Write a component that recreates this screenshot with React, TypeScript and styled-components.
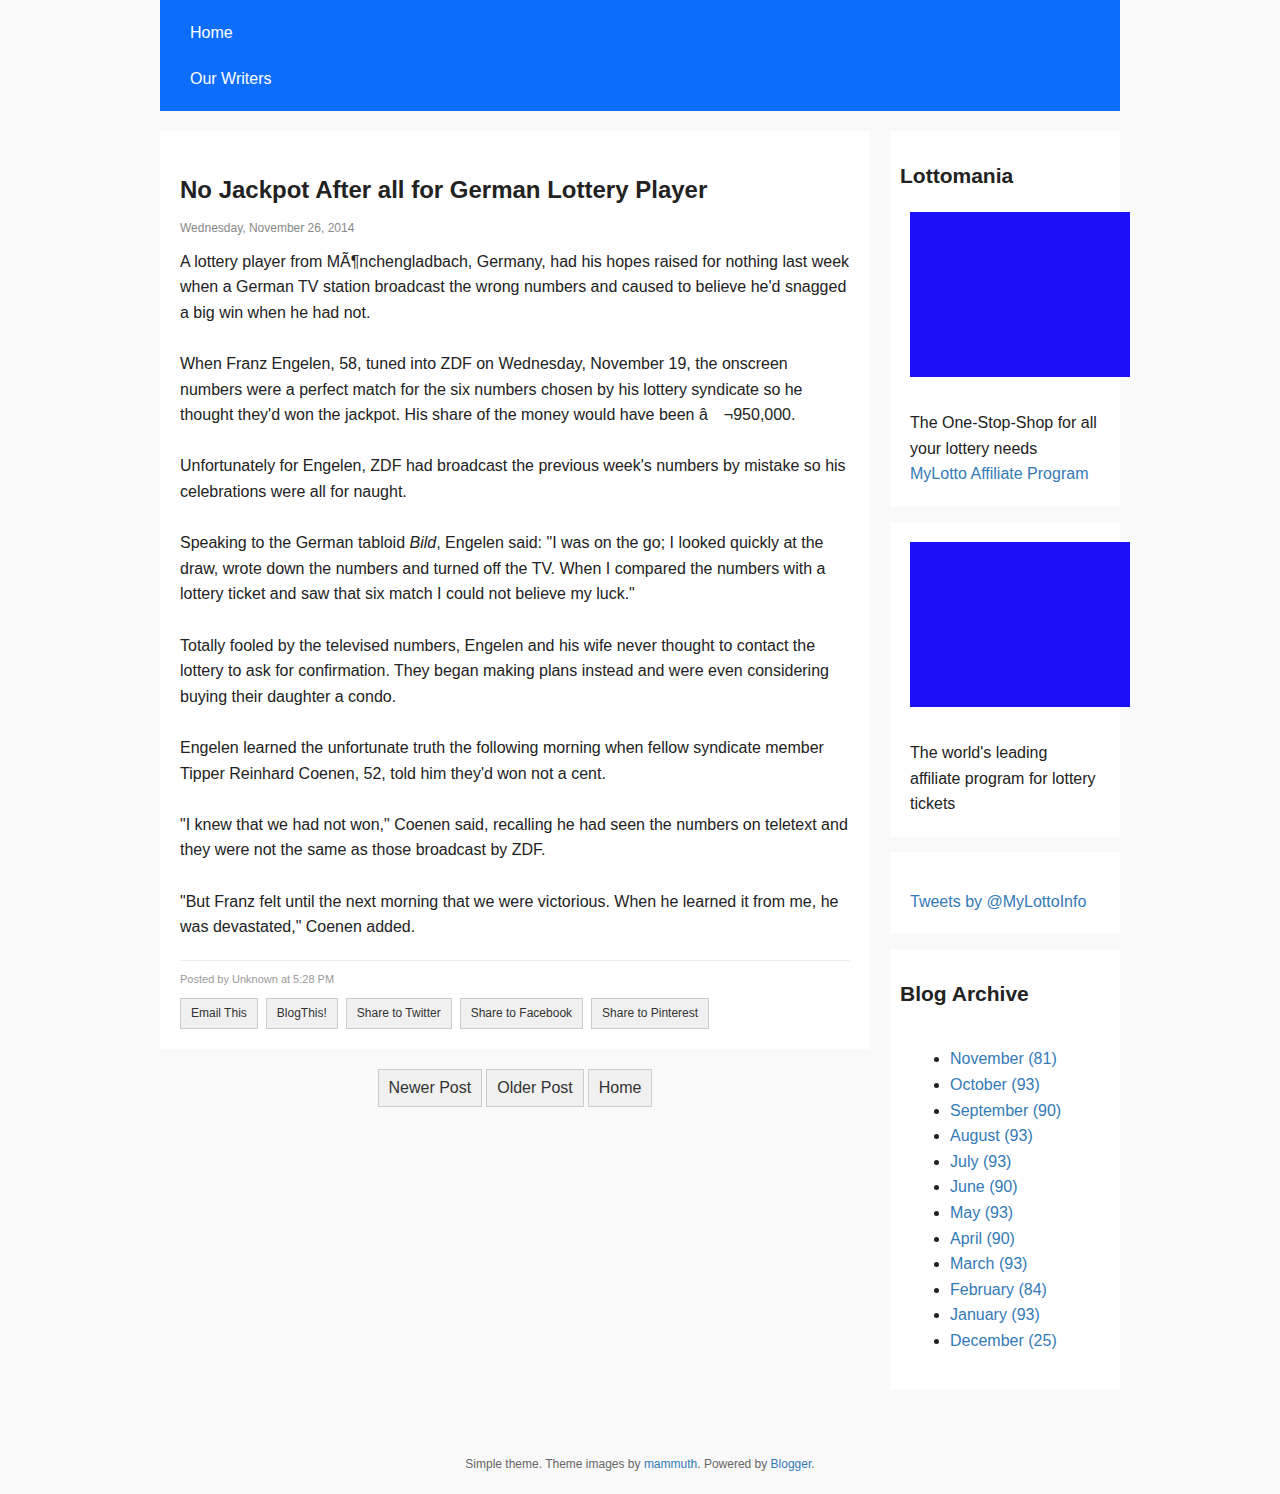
import React from 'react';
import styled, { createGlobalStyle } from 'styled-components';

const GlobalStyle = createGlobalStyle`
  *, *::before, *::after { box-sizing: border-box; }
  body {
    margin: 0;
    background: #f9f9f9;
    color: #222;
    font-family: "Liberation Sans", Arial, Helvetica, sans-serif;
    font-size: 16px;
    line-height: 1.6;
  }
  a { color: #337ab7; text-decoration: none; }
  a:hover { text-decoration: underline; }
`;

const Page = styled.div`
  max-width: 960px;
  margin: 0 auto;
`;

const Nav = styled.nav`
  padding: 10px;
  background: #0d6efd;
`;

const NavLink = styled.a`
  display: block;
  padding: 10px 20px;
  && { color: #fff; }
`;

const Columns = styled.div`
  display: grid;
  grid-template-columns: minmax(0, 1fr) 230px;
  align-items: start;
  gap: 20px;
  margin-top: 20px;
  @media (max-width: 700px) {
    grid-template-columns: minmax(0, 1fr);
  }
`;

const Main = styled.main`
  min-width: 0;
`;

const Sidebar = styled.aside`
  display: flex;
  flex-direction: column;
  gap: 15px;
`;

const Post = styled.article`
  padding: 20px;
  background: #fff;
`;

const PostTitle = styled.h2`
  margin-bottom: 10px;
  font-size: 24px;
`;

const PostDate = styled.time`
  display: block;
  margin-bottom: 10px;
  color: #888;
  font-size: 12px;
`;

const PostBody = styled.div`
  display: flex;
  flex-direction: column;
  gap: 1.6em;
`;

const Paragraph = styled.p`
  margin: 0;
`;

const PostFooter = styled.footer`
  margin-top: 20px;
  padding-top: 10px;
  border-top: 1px solid #eee;
`;

const Byline = styled.p`
  margin: 0 0 10px;
  color: #999;
  font-size: 11px;
`;

const ShareRow = styled.div`
  display: flex;
  flex-wrap: wrap;
  gap: 8px;
  font-size: 12px;
`;

const BoxLink = styled.a`
  padding: 5px 10px;
  border: 1px solid #ccc;
  background: #f0f0f0;
  && { color: #333; }
`;

const Pager = styled.nav`
  display: flex;
  justify-content: center;
  gap: 4px;
  margin-top: 20px;
`;

const Widget = styled.section`
  padding: 10px;
  background: #fff;
`;

const WidgetTitle = styled.h2`
  margin-bottom: 10px;
  font-size: 21px;
`;

const WidgetContent = styled.div`
  padding: 10px;
`;

const Banner = styled.div`
  width: 220px;
  height: 165px;
  margin-bottom: 33px;
  background: #1c10f8;
`;

const TweetLink = styled.a`
  display: block;
  margin-top: 17px;
`;

const ArchiveList = styled.ul`
  margin: 16px 0;
  padding-left: 40px;
`;

const Attribution = styled.footer`
  margin-top: 45px;
  padding: 20px;
  color: #666;
  font-size: 12px;
  text-align: center;
`;

const paragraphs: React.ReactNode[] = [
  "A lottery player from MÃ¶nchengladbach, Germany, had his hopes raised for nothing last week when a German TV station broadcast the wrong numbers and caused to believe he'd snagged a big win when he had not.",
  "When Franz Engelen, 58, tuned into ZDF on Wednesday, November 19, the onscreen numbers were a perfect match for the six numbers chosen by his lottery syndicate so he thought they'd won the jackpot. His share of the money would have been â\u2003¬950,000.",
  "Unfortunately for Engelen, ZDF had broadcast the previous week's numbers by mistake so his celebrations were all for naught.",
  <>Speaking to the German tabloid <i>Bild</i>, Engelen said: "I was on the go; I looked quickly at the draw, wrote down the numbers and turned off the TV. When I compared the numbers with a lottery ticket and saw that six match I could not believe my luck."</>,
  "Totally fooled by the televised numbers, Engelen and his wife never thought to contact the lottery to ask for confirmation. They began making plans instead and were even considering buying their daughter a condo.",
  "Engelen learned the unfortunate truth the following morning when fellow syndicate member Tipper Reinhard Coenen, 52, told him they'd won not a cent.",
  '"I knew that we had not won," Coenen said, recalling he had seen the numbers on teletext and they were not the same as those broadcast by ZDF.',
  '"But Franz felt until the next morning that we were victorious. When he learned it from me, he was devastated," Coenen added.',
];

const shareTargets = ['Email This', 'BlogThis!', 'Share to Twitter', 'Share to Facebook', 'Share to Pinterest'];

const pagerLinks = ['Newer Post', 'Older Post', 'Home'];

const archive: [string, number][] = [
  ['November', 81],
  ['October', 93],
  ['September', 90],
  ['August', 93],
  ['July', 93],
  ['June', 90],
  ['May', 93],
  ['April', 90],
  ['March', 93],
  ['February', 84],
  ['January', 93],
  ['December', 25],
];

export default function App() {
  return (
    <>
      <GlobalStyle />
      <Page>
        <Nav>
          <NavLink href="#home">Home</NavLink>
          <NavLink href="#writers">Our Writers</NavLink>
        </Nav>
        <Columns>
          <Main>
            <Post>
              <PostTitle>No Jackpot After all for German Lottery Player</PostTitle>
              <PostDate dateTime="2014-11-26">Wednesday, November 26, 2014</PostDate>
              <PostBody>
                {paragraphs.map((text, i) => (
                  <Paragraph key={i}>{text}</Paragraph>
                ))}
              </PostBody>
              <PostFooter>
                <Byline>Posted by Unknown at 5:28 PM</Byline>
                <ShareRow>
                  {shareTargets.map((label) => (
                    <BoxLink key={label} href="#share">{label}</BoxLink>
                  ))}
                </ShareRow>
              </PostFooter>
            </Post>
            <Pager>
              {pagerLinks.map((label) => (
                <BoxLink key={label} href="#post">{label}</BoxLink>
              ))}
            </Pager>
          </Main>
          <Sidebar>
            <Widget>
              <WidgetTitle>Lottomania</WidgetTitle>
              <WidgetContent>
                <Banner />
                <Paragraph>The One-Stop-Shop for all your lottery needs</Paragraph>
                <a href="#affiliate">MyLotto Affiliate Program</a>
              </WidgetContent>
            </Widget>
            <Widget>
              <WidgetContent>
                <Banner />
                <Paragraph>The world's leading affiliate program for lottery tickets</Paragraph>
              </WidgetContent>
            </Widget>
            <Widget>
              <WidgetContent>
                <TweetLink href="#tweets">Tweets by @MyLottoInfo</TweetLink>
              </WidgetContent>
            </Widget>
            <Widget>
              <WidgetTitle>Blog Archive</WidgetTitle>
              <WidgetContent>
                <ArchiveList>
                  {archive.map(([month, count]) => (
                    <li key={month}>
                      <a href={`#${month.toLowerCase()}`}>{`${month} (${count})`}</a>
                    </li>
                  ))}
                </ArchiveList>
              </WidgetContent>
            </Widget>
          </Sidebar>
        </Columns>
        <Attribution>
          Simple theme. Theme images by <a href="#mammuth">mammuth</a>. Powered by <a href="#blogger">Blogger</a>.
        </Attribution>
      </Page>
    </>
  );
}
